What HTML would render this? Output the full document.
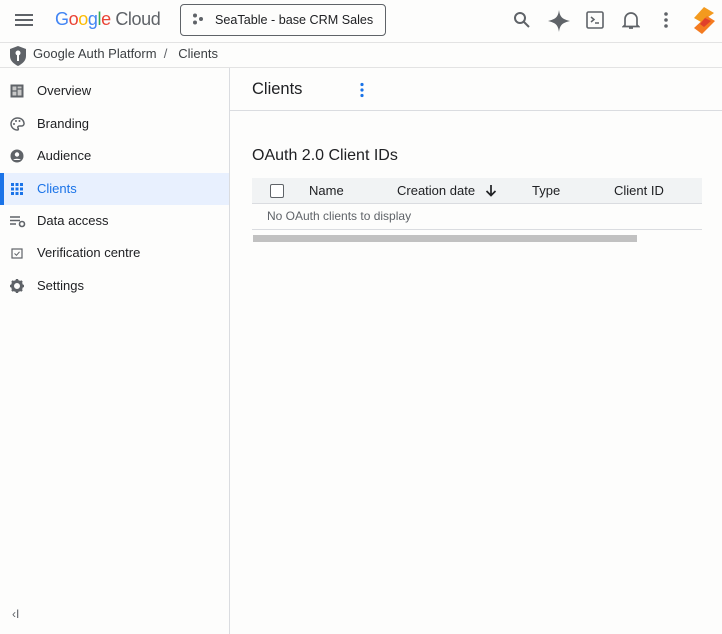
<!DOCTYPE html>
<html><head><meta charset="utf-8"><style>
*{box-sizing:border-box;margin:0;padding:0}
body{width:722px;height:634px;overflow:hidden;background:#fdfdfc;font-family:"Liberation Sans",Roboto,sans-serif;color:#202124;position:relative}
.abs{position:absolute}
.top{left:0;top:0;width:722px;height:43px;border-bottom:1px solid #e3e3e3}
.crumb{top:44px;left:0;width:722px;height:24px;border-bottom:1px solid #e3e3e3}
.side{top:68px;left:0;width:230px;height:566px;border-right:1px solid #dadce0}
.item{position:absolute;left:0;width:229px;height:32px;font-size:13px;color:#202124;line-height:32px;padding-left:37px}
.item svg{position:absolute;left:10px;top:9px}
.sel{background:#e8f0fe;color:#1a73e8}
.sel:before{content:"";position:absolute;left:0;top:0;width:4px;height:32px;background:#1a73e8}
</style></head><body>
<div class="abs top">
 <svg class="abs" style="left:15px;top:13px" width="19" height="14"><rect y="1" width="18" height="2" fill="#5f6368"/><rect y="6" width="18" height="2" fill="#5f6368"/><rect y="11" width="18" height="2" fill="#5f6368"/></svg>
 <div class="abs" style="left:55px;top:9px;font-size:18px;letter-spacing:-0.4px"><span style="color:#4285f4">G</span><span style="color:#ea4335">o</span><span style="color:#fbbc05">o</span><span style="color:#4285f4">g</span><span style="color:#34a853">l</span><span style="color:#ea4335">e</span> <span style="color:#5f6368">Cloud</span></div>
 <div class="abs" style="left:180px;top:4px;width:206px;height:32px;border:1px solid #5f6368;border-radius:4px;font-size:12.6px;line-height:30px;padding-left:34px">SeaTable - base CRM Sales</div>
 <svg class="abs" style="left:192px;top:13px" width="12" height="12"><circle cx="3" cy="2.5" r="2" fill="#5f6368"/><circle cx="9" cy="6" r="2" fill="#5f6368"/><circle cx="3" cy="9.5" r="2" fill="#5f6368"/></svg>
 <svg class="abs" style="left:513px;top:11px" width="18" height="18"><circle cx="7" cy="7" r="5" stroke="#5f6368" stroke-width="2" fill="none"/><path d="M11 11l5 5" stroke="#5f6368" stroke-width="2"/></svg>
 <svg class="abs" style="left:548px;top:10px" width="22" height="22"><path d="M11 0C12 7 14 9 22 11C14 13 12 15 11 22C10 15 8 13 0 11C8 9 10 7 11 0Z" fill="#5f6368"/></svg>
 <svg class="abs" style="left:586px;top:11px" width="18" height="18"><rect x="1" y="1" width="16" height="16" rx="1.5" stroke="#5f6368" stroke-width="1.6" fill="none"/><path d="M5 6l3 2.5-3 2.5M9 12h4" stroke="#5f6368" stroke-width="1.5" fill="none"/></svg>
 <svg class="abs" style="left:622px;top:10px" width="18" height="20"><path d="M3 15V9a6 6 0 0112 0v6l1.5 1.5h-15z" stroke="#5f6368" stroke-width="1.7" fill="none"/><path d="M7 18h4" stroke="#5f6368" stroke-width="1.7"/></svg>
 <svg class="abs" style="left:663px;top:12px" width="6" height="18"><circle cx="3" cy="2" r="1.8" fill="#5f6368"/><circle cx="3" cy="8" r="1.8" fill="#5f6368"/><circle cx="3" cy="14" r="1.8" fill="#5f6368"/></svg>
 <svg class="abs" style="left:692px;top:6px" width="26" height="30"><path d="M12 1l10 6-13 9-7-4z" fill="#f39a1e"/><path d="M15 10l8 5-13 13-8-6z" fill="#f47b20"/><path d="M13 12l6 3-7 6-4-3z" fill="#e0402b"/></svg>
</div>
<div class="abs crumb">
 <svg class="abs" style="left:10px;top:2px" width="16" height="20"><path d="M8 0l8 3v7c0 5-4 8-8 10-4-2-8-5-8-10V3z" fill="#5f6368"/><circle cx="8" cy="7" r="2.5" fill="#fff"/><path d="M8 9v6" stroke="#fff" stroke-width="2"/></svg>
 <div class="abs" style="left:33px;top:2px;font-size:13px;color:#3c4043">Google Auth Platform &nbsp;<span style="color:#5f6368">/</span>&nbsp;&nbsp; Clients</div>
</div>
<div class="abs side">
 <div class="item" style="top:7px"><svg width="14" height="14"><rect x="0.5" y="0.5" width="13" height="13" fill="#5f6368"/><rect x="2.5" y="2.5" width="9" height="9" fill="#c8c8c8"/><path d="M7 2.5v9M2.5 7h4.5M7 5h4.5" stroke="#5f6368" stroke-width="1.2"/></svg>Overview</div>
 <div class="item" style="top:40px"><svg width="15" height="14"><path d="M7.5 1a6.5 6 0 100 12c1 0 1-1 .5-2s0-2 1.5-2h2a2.5 2.5 0 002.5-3C13.5 3 11 1 7.5 1z" fill="none" stroke="#5f6368" stroke-width="1.5"/><circle cx="4" cy="7" r="1" fill="#5f6368"/><circle cx="6" cy="4" r="1" fill="#5f6368"/><circle cx="9.5" cy="4" r="1" fill="#5f6368"/></svg>Branding</div>
 <div class="item" style="top:72px"><svg width="14" height="14"><circle cx="7" cy="7" r="6.5" fill="#5f6368"/><circle cx="7" cy="5.5" r="2.2" fill="#fff"/><path d="M3 11a5 3 0 018 0" fill="#fff"/></svg>Audience</div>
 <div class="item sel" style="top:105px"><svg width="14" height="14" fill="#1a73e8"><rect x="1" y="1" width="3" height="3"/><rect x="5.5" y="1" width="3" height="3"/><rect x="10" y="1" width="3" height="3"/><rect x="1" y="5.5" width="3" height="3"/><rect x="5.5" y="5.5" width="3" height="3"/><rect x="10" y="5.5" width="3" height="3"/><rect x="1" y="10" width="3" height="3"/><rect x="5.5" y="10" width="3" height="3"/><rect x="10" y="10" width="3" height="3"/></svg>Clients</div>
 <div class="item" style="top:137px"><svg width="16" height="14"><path d="M0 3h10M0 6.5h10M0 10h6" stroke="#5f6368" stroke-width="1.4"/><circle cx="12" cy="10" r="2.5" fill="none" stroke="#5f6368" stroke-width="1.6"/></svg>Data access</div>
 <div class="item" style="top:169px"><svg width="14" height="14"><rect x="2" y="3" width="10" height="9" fill="none" stroke="#5f6368" stroke-width="1.2"/><path d="M4.5 7.5l2 1.8 3-3.5" stroke="#5f6368" stroke-width="1" fill="none"/></svg>Verification centre</div>
 <div class="item" style="top:202px"><svg width="14" height="14"><circle cx="7" cy="7" r="4.5" fill="none" stroke="#5f6368" stroke-width="3"/><path d="M7 0v3M7 11v3M0 7h3M11 7h3M2 2l2 2M10 10l2 2M12 2l-2 2M2 12l2-2" stroke="#5f6368" stroke-width="2.4"/></svg>Settings</div>
 <div class="abs" style="left:12px;top:539px;font-size:12px;color:#5f6368">&lsaquo;I</div>
</div>
<div class="abs" style="left:230px;top:68px;width:492px;height:43px;border-bottom:1px solid #dadce0"></div>
<div class="abs" style="left:252px;top:80px;font-size:16.5px;color:#202124">Clients</div>
<svg class="abs" style="left:359px;top:82px" width="6" height="16"><circle cx="3" cy="2.5" r="1.6" fill="#1a73e8"/><circle cx="3" cy="8" r="1.6" fill="#1a73e8"/><circle cx="3" cy="13.5" r="1.6" fill="#1a73e8"/></svg>
<div class="abs" style="left:252px;top:147px;font-size:16px;color:#202124">OAuth 2.0 Client IDs</div>
<div class="abs" style="left:252px;top:178px;width:450px;height:26px;background:#f1f3f4;border-bottom:1px solid #dadce0;font-size:13px;line-height:25px">
 <div class="abs" style="left:18px;top:6px;width:14px;height:14px;border:1.5px solid #5f6368;border-radius:2px;background:#fff"></div>
 <span class="abs" style="left:57px">Name</span><span class="abs" style="left:145px">Creation date</span>
 <svg class="abs" style="left:233px;top:6px" width="12" height="13"><path d="M6 1v10M1.5 7l4.5 4.5L10.5 7" stroke="#202124" stroke-width="1.7" fill="none"/></svg>
 <span class="abs" style="left:280px">Type</span><span class="abs" style="left:362px">Client ID</span>
</div>
<div class="abs" style="left:267px;top:209px;font-size:12px;color:#5f6368">No OAuth clients to display</div>
<div class="abs" style="left:252px;top:229px;width:450px;height:1px;background:#dadce0"></div>
<div class="abs" style="left:253px;top:235px;width:384px;height:7px;background:#c1c1c1"></div>
</body></html>
